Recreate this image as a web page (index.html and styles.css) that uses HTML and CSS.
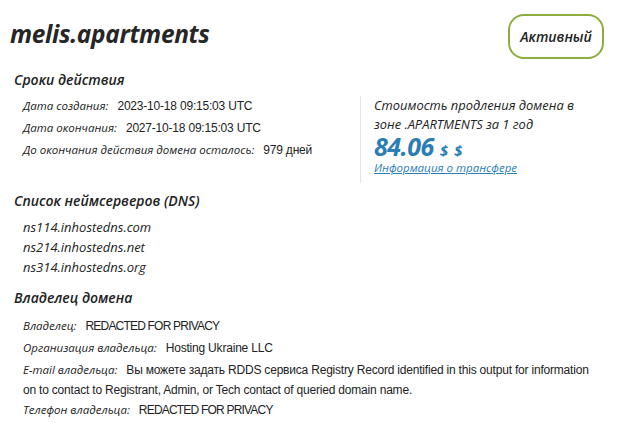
FILE: index.html
```html
<!DOCTYPE html>
<html lang="ru">
<head>
<meta charset="utf-8">
<link rel="stylesheet" href="styles.css">
</head>
<body>
<div class="page">
  <header class="top">
    <h1 class="domain">melis.apartments</h1>
    <span class="badge">Активный</span>
  </header>

  <h2 class="heading">Сроки действия</h2>
  <div class="terms">
    <div class="rows">
      <div class="row"><span class="label">Дата создания:</span><span class="val">2023-10-18 09:15:03 UTC</span></div>
      <div class="row"><span class="label">Дата окончания:</span><span class="val">2027-10-18 09:15:03 UTC</span></div>
      <div class="row"><span class="label">До окончания действия домена осталось:</span><span class="val">979 дней</span></div>
    </div>
    <div class="price-box">
      <p class="price-title">Стоимость продления домена в зоне .APARTMENTS за 1 год</p>
      <div class="price"><span class="amount">84.06</span><span class="cur">$ $</span></div>
      <a class="transfer" href="#">Информация о трансфере</a>
    </div>
  </div>

  <h2 class="heading dns-heading">Список неймсерверов (DNS)</h2>
  <ul class="ns">
    <li>ns114.inhostedns.com</li>
    <li>ns214.inhostedns.net</li>
    <li>ns314.inhostedns.org</li>
  </ul>

  <h2 class="heading owner-heading">Владелец домена</h2>
  <div class="rows owner">
    <div class="row"><span class="label">Владелец:</span><span class="val caps">REDACTED FOR PRIVACY</span></div>
    <div class="row"><span class="label">Организация владельца:</span><span class="val">Hosting Ukraine LLC</span></div>
    <div class="row row-wrap"><span class="label">E-mail владельца:</span><span class="val">Вы можете задать RDDS сервиса Registry Record identified in this output for information on to contact to Registrant, Admin, or Tech contact of queried domain name.</span></div>
    <div class="row"><span class="label">Телефон владельца:</span><span class="val caps">REDACTED FOR PRIVACY</span></div>
  </div>
</div>
</body>
</html>
```

FILE: styles.css
```css
* { box-sizing: border-box; }
body {
  margin: 0;
  background: #fff;
  color: #222;
  font-family: "Liberation Sans", Arial, sans-serif;
}
.page {
  width: 619px;
  padding: 13px 15px 0 10px;
}
.top {
  display: flex;
  justify-content: space-between;
  align-items: flex-start;
}
.domain {
  margin: 5px 0 0 0;
  font-family: "Open Sans", sans-serif;
  font-style: italic;
  font-weight: 700;
  font-size: 24.4px;
  line-height: 32px;
  letter-spacing: -0.3px;
  color: #262626;
}
.badge {
  margin-top: 1px;
  display: inline-block;
  width: 96px;
  height: 45px;
  line-height: 41px;
  text-align: center;
  border: 2px solid #8dae3e;
  border-radius: 16px;
  font-family: "Open Sans", sans-serif;
  font-style: italic;
  font-weight: 600;
  font-size: 14px;
  color: #222;
}
.heading {
  margin: 10px 0 0 4px;
  font-family: "Open Sans", sans-serif;
  font-style: italic;
  font-weight: 600;
  font-size: 14px;
  line-height: 22px;
  color: #222;
}
.terms {
  display: flex;
  margin-top: 5px;
}
.rows {
  padding-left: 13px;
}
.terms .rows {
  width: 350px;
}
.row {
  font-size: 12px;
  line-height: 20px;
  margin-bottom: 2px;
}
.row-wrap { margin-bottom: 0; }
.label {
  font-family: "Open Sans", sans-serif;
  font-style: italic;
  font-size: 11.5px;
  line-height: 1;
  margin-right: 9px;
}
.val {
  color: #222;
  line-height: 1;
  letter-spacing: -0.2px;
}
.val.caps { letter-spacing: -0.8px; }
.price-box {
  border-left: 1px solid #e6e6e6;
  padding: 0 0 7px 13px;
  width: 235px;
}
.price-title {
  margin: 0;
  font-family: "Open Sans", sans-serif;
  font-style: italic;
  font-size: 12.9px;
  line-height: 19px;
}
.price {
  height: 24px;
  line-height: 24px;
  color: #2a7db5;
}
.amount {
  font-family: "Open Sans", sans-serif;
  font-style: italic;
  font-weight: 700;
  font-size: 25px;
  line-height: 1;
  letter-spacing: -0.5px;
}
.cur {
  margin-left: 6px;
  font-family: "Open Sans", sans-serif;
  font-style: italic;
  font-weight: 700;
  font-size: 15px;
  line-height: 1;
  letter-spacing: 1px;
}
.transfer {
  display: inline-block;
  margin-top: 1px;
  font-family: "Open Sans", sans-serif;
  font-style: italic;
  font-size: 11.5px;
  color: #2a7db5;
  text-decoration: underline;
}
.dns-heading { margin-top: 7px; }
.ns {
  list-style: none;
  margin: 5px 0 0 0;
  padding-left: 13px;
}
.ns li {
  font-family: "Open Sans", sans-serif;
  font-style: italic;
  font-size: 13px;
  line-height: 20px;
}
.owner-heading { margin-top: 10px; }
.owner { margin-top: 7px; }
```
